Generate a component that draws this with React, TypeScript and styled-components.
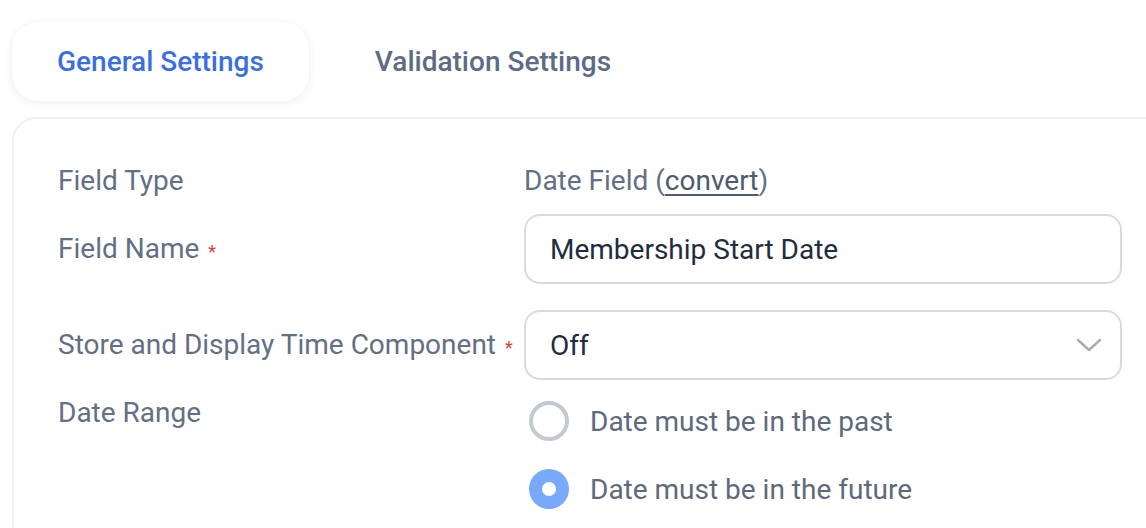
import React from "react";
import styled, { createGlobalStyle } from "styled-components";

const Global = createGlobalStyle`
  html, body { margin: 0; padding: 0; background: #ffffff; }
  body { font-family: Roboto, "Liberation Sans", Arial, sans-serif; overflow: hidden; }
  * { box-sizing: border-box; }
`;

const Page = styled.div`
  width: 1146px;
  height: 528px;
  overflow: hidden;
  padding: 22px 0 0 12px;
`;

const Tabs = styled.div`
  display: flex;
  gap: 21px;
  align-items: center;
`;

const Tab = styled.button<{ $active?: boolean }>`
  height: 79px;
  padding: 0 45px;
  border: none;
  border-radius: 26px;
  font-family: Roboto, "Liberation Sans", Arial, sans-serif;
  font-size: 28px;
  font-weight: 500;
  letter-spacing: 0;
  cursor: pointer;
  background: ${(p) => (p.$active ? "#ffffff" : "transparent")};
  color: ${(p) => (p.$active ? "#3b6fe1" : "#5e6b85")};
  box-shadow: ${(p) =>
    p.$active ? "0 2px 10px rgba(20, 30, 50, 0.07), 0 0 1px rgba(20,30,50,0.06)" : "none"};
`;

const Panel = styled.div`
  margin-top: 16px;
  width: 1180px;
  min-height: 460px;
  border: 2px solid #f0f0f1;
  border-right: none;
  border-bottom: none;
  border-radius: 24px 0 0 0;
  padding: 44px 0 0 44px;
  display: flex;
  flex-direction: column;
`;

const Row = styled.div<{ $align?: "center" | "start"; $gap?: number }>`
  display: flex;
  align-items: ${(p) => (p.$align === "start" ? "flex-start" : "center")};
  margin-bottom: ${(p) => p.$gap ?? 0}px;
`;

const Label = styled.div`
  width: 466px;
  flex: none;
  font-size: 28px;
  line-height: 36px;
  color: #637083;
  display: flex;
  align-items: center;
`;

const Required = styled.span`
  color: #d0453d;
  font-size: 18px;
  line-height: 1;
  margin-left: 9px;
  position: relative;
  top: 3px;
`;

const Value = styled.div`
  font-size: 28px;
  line-height: 36px;
  color: #637083;
`;

const LinkText = styled.a`
  color: #4f5b6c;
  text-decoration: underline;
  text-underline-offset: 4px;
  text-decoration-thickness: 2px;
  cursor: pointer;
`;

const TextInput = styled.input`
  width: 598px;
  height: 70px;
  border: 2px solid #d7dbe0;
  border-radius: 16px;
  padding: 0 24px;
  font-family: Roboto, "Liberation Sans", Arial, sans-serif;
  font-size: 28px;
  color: #1f2d3e;
  outline: none;
  background: #fff;
`;

const SelectBox = styled.div`
  width: 598px;
  height: 70px;
  border: 2px solid #d7dbe0;
  border-radius: 16px;
  padding: 0 18px 0 24px;
  display: flex;
  align-items: center;
  justify-content: space-between;
  font-size: 28px;
  color: #1f2d3e;
  background: #fff;
`;

const RadioGroup = styled.div`
  display: flex;
  flex-direction: column;
  gap: 16px;
  padding-left: 5px;
`;

const RadioItem = styled.label`
  display: flex;
  align-items: center;
  gap: 21px;
  height: 52px;
  font-size: 28px;
  color: #5c6a7b;
  cursor: pointer;
`;

const RadioDot = styled.span<{ $checked?: boolean }>`
  width: 40px;
  height: 40px;
  border-radius: 50%;
  flex: none;
  display: flex;
  align-items: center;
  justify-content: center;
  background: ${(p) => (p.$checked ? "#78a9fa" : "#fff")};
  border: ${(p) => (p.$checked ? "none" : "4px solid #c4c9cf")};
  &::after {
    content: "";
    display: ${(p) => (p.$checked ? "block" : "none")};
    width: 14px;
    height: 14px;
    border-radius: 50%;
    background: #fff;
  }
`;

const Chevron = () => (
  <svg width="26" height="16" viewBox="0 0 26 16" fill="none">
    <path d="M2 3 L13 13 L24 3" stroke="#a8adb5" strokeWidth="2.4" strokeLinecap="round" strokeLinejoin="round" />
  </svg>
);

export default function App() {
  return (
    <>
      <Global />
      <Page>
        <Tabs>
          <Tab $active>General Settings</Tab>
          <Tab>Validation Settings</Tab>
        </Tabs>
        <Panel>
          <Row $gap={15}>
            <Label>Field Type</Label>
            <Value>
              Date Field (<LinkText>convert</LinkText>)
            </Value>
          </Row>
          <Row $gap={26}>
            <Label>
              Field Name<Required>*</Required>
            </Label>
            <TextInput defaultValue="Membership Start Date" />
          </Row>
          <Row $gap={15}>
            <Label>
              Store and Display Time Component<Required>*</Required>
            </Label>
            <SelectBox>
              <span>Off</span>
              <Chevron />
            </SelectBox>
          </Row>
          <Row $align="start">
            <Label>Date Range</Label>
            <RadioGroup>
              <RadioItem>
                <RadioDot />
                Date must be in the past
              </RadioItem>
              <RadioItem>
                <RadioDot $checked />
                Date must be in the future
              </RadioItem>
            </RadioGroup>
          </Row>
        </Panel>
      </Page>
    </>
  );
}
